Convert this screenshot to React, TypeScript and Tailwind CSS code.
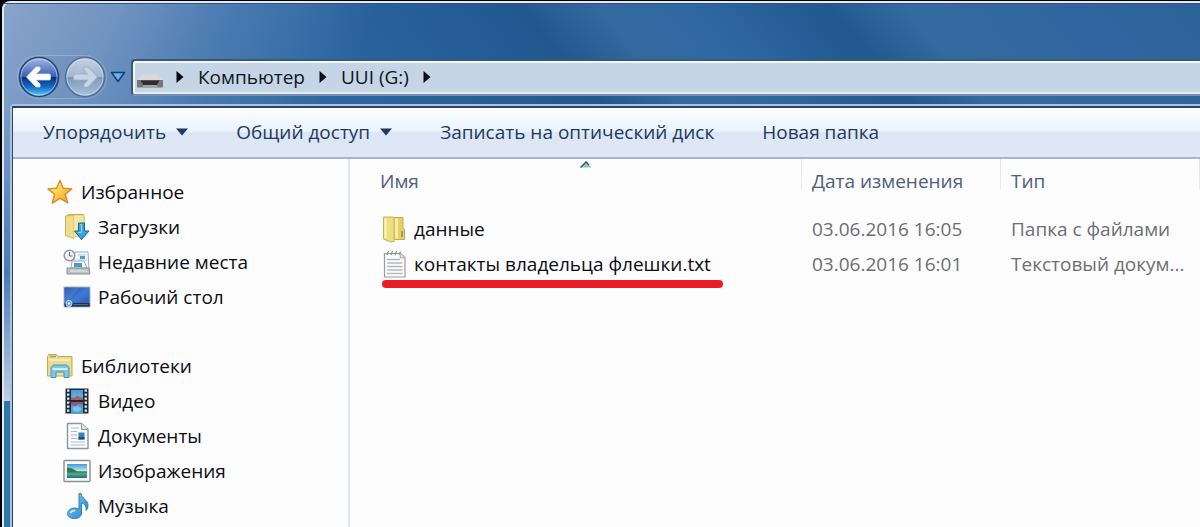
import type { ReactNode } from 'react';
import { clsx } from 'clsx';

interface NavItem {
  label: string;
  icon: ReactNode;
}

interface NavGroup extends NavItem {
  items: NavItem[];
}

interface FileEntry {
  name: string;
  icon: ReactNode;
  modified: string;
  type: string;
  marked?: boolean;
}

const StarIcon = () => (
  <svg viewBox="0 0 26 26" className="w-[26px] h-[26px]" aria-hidden="true">
    <defs>
      <linearGradient id="star" x1="0" y1="0" x2="1" y2="1">
        <stop offset="0" stopColor="#fff3a0" />
        <stop offset="0.5" stopColor="#fcd04a" />
        <stop offset="1" stopColor="#ee8f1c" />
      </linearGradient>
    </defs>
    <path
      d="M13 1.5l3.2 7.8 8.6.6-6.6 5.4 2.6 8.6-7.8-4.6-7.8 4.8 2.4-8.8L1 9.9l8.6-.6z"
      fill="url(#star)"
      stroke="#d98a2b"
      strokeWidth="1.4"
      strokeLinejoin="round"
    />
  </svg>
);

const DownloadsIcon = () => (
  <svg viewBox="0 0 26 28" className="w-[26px] h-7" aria-hidden="true">
    <path d="M1.5 3.5L5 1.5h14a1 1 0 0 1 1 1v21H9l-7.5-1.5z" fill="#e9cf74" stroke="#c9a94f" />
    <path d="M1.5 3l8.5-1v23.5l-8.5-3z" fill="#f3dc8a" stroke="#cfae55" strokeWidth="0.8" />
    <path d="M10 2.5h9.5v21H10z" fill="#f7e7a4" />
    <path d="M14.5 10h6v8H25l-7.5 8.5L10.5 18h4z" fill="#3aa2e0" stroke="#17699f" strokeLinejoin="round" />
    <path d="M16 11.5h1.5v8H14" stroke="#9bdcf8" fill="none" />
  </svg>
);

const RecentIcon = () => (
  <svg viewBox="0 0 28 26" className="w-7 h-[26px]" aria-hidden="true">
    <path d="M12 3h13l1 17H10z" fill="#f4f8fb" stroke="#9fabb5" />
    <path d="M15 6h8M15 11h9" stroke="#b7cbd8" />
    <path d="M17 7h5v3h-5z" fill="#4aa0c8" />
    <path d="M9 12h12l3 7H8z" fill="#fff" stroke="#9fabb5" />
    <path d="M11 14h8v4h-8z" fill="#4d9cbf" />
    <path d="M4 19h22l1 6H4z" fill="#bcc3c9" stroke="#87919a" />
    <path d="M7 22h17" stroke="#e9edf0" />
    <circle cx="6.5" cy="6.5" r="5.3" fill="#f2f5f7" stroke="#8d98a2" strokeWidth="1.5" />
    <path d="M6.5 3v4h3" stroke="#5f6c78" fill="none" />
  </svg>
);

const DesktopIcon = () => (
  <svg viewBox="0 0 28 22" className="w-7 h-[22px]" aria-hidden="true">
    <defs>
      <linearGradient id="desk" x1="0" y1="0" x2="1" y2="1">
        <stop offset="0" stopColor="#163f94" />
        <stop offset="0.5" stopColor="#3f79d6" />
        <stop offset="1" stopColor="#2255b8" />
      </linearGradient>
    </defs>
    <rect x="1" y="1" width="26" height="20" fill="url(#desk)" stroke="#aab6c6" />
    <path d="M2 2h14L4 17H2z" fill="#6f9fe8" opacity="0.3" />
    <path d="M1.5 17h25v3.500h-25z" fill="#27323f" />
    <path d="M10 18.5h15" stroke="#5a6877" />
    <circle cx="6" cy="17.500" r="3" fill="#4c9fd4" stroke="#bfe2f5" />
    <path d="M4.500 17.500h3M6 16v3" stroke="#e7f6fd" />
  </svg>
);

const LibrariesIcon = () => (
  <svg viewBox="0 0 28 26" className="w-7 h-[26px]" aria-hidden="true">
    <path d="M1.5 3.5l1-2h8l1.5 2h14v19.5H1.5z" fill="#eddb8b" stroke="#c2a955" strokeLinejoin="round" />
    <path d="M4 3.5h6" stroke="#7ab069" strokeWidth="1.5" />
    <path d="M2.5 7h22" stroke="#fbf2bf" strokeWidth="1.5" />
    <path
      d="M5 24.5v-10L7.500 12h13l2.500 2.500v10h-5V19h-8v5.500z"
      fill="#7cc6e6"
      stroke="#4595be"
      strokeLinejoin="round"
    />
    <path d="M6.5 16h15" stroke="#cdeefa" strokeWidth="2" />
  </svg>
);

const VideoIcon = () => (
  <svg viewBox="0 0 26 28" className="w-[26px] h-7" aria-hidden="true">
    <rect x="1.500" y="1.500" width="23" height="25" fill="#1d2a35" />
    <path d="M4.200 2.500V26M21.800 2.500V26" stroke="#dbe8ef" strokeWidth="2.400" strokeDasharray="2.200 1.800" />
    <path d="M7 3h12v10H7zM7 15h12v11H7z" fill="#4aa0dc" />
    <path d="M7 10l3-5 3 3 3-3 3 4v4H7z" fill="#6ea7cd" />
    <path d="M7 13v-3l3 1 3-2 6 2v2z" fill="#9b6370" />
    <path d="M7 15h12v3l-4-1-4 2-4-1z" fill="#a35260" />
    <path d="M9 20l5-1 4 3-4 3-5-1z" fill="#75c4ee" />
  </svg>
);

const DocumentsIcon = () => (
  <svg viewBox="0 0 26 28" className="w-[26px] h-7" aria-hidden="true">
    <path d="M3.5 1.5h14l6.500 6v19h-20.500z" fill="#fbfcfd" stroke="#8f959c" strokeWidth="1.4" strokeLinejoin="round" />
    <path d="M17.500 1.500v6H24" fill="#dfe5ea" stroke="#8f959c" strokeLinejoin="round" />
    <path d="M7 6h8M7 9.500h6M7 13h6M7 16.500h6M7 20h14M7 23h14" stroke="#a8bccd" strokeWidth="1.2" />
    <path d="M14.500 10.500h6v7h-6z" fill="#3a80bd" />
    <path d="M14.500 15h6v2.500h-6z" fill="#24506f" />
  </svg>
);

const PicturesIcon = () => (
  <svg viewBox="0 0 28 24" className="w-7 h-6" aria-hidden="true">
    <defs>
      <linearGradient id="sky" x1="0" y1="0" x2="0" y2="1">
        <stop offset="0" stopColor="#3f9bd0" />
        <stop offset="0.5" stopColor="#c4e8ef" />
        <stop offset="0.55" stopColor="#2c7c5c" />
        <stop offset="0.7" stopColor="#58a98a" />
        <stop offset="1" stopColor="#1c6f86" />
      </linearGradient>
    </defs>
    <rect x="1" y="1.500" width="26" height="21" rx="1" fill="#fdfdfd" stroke="#8b8f93" strokeWidth="1.4" />
    <rect x="4" y="5" width="20" height="14" fill="url(#sky)" />
    <path d="M4 9c5-1 8 3 12 4H4z" fill="#2b7d4d" />
  </svg>
);

const MusicIcon = () => (
  <svg viewBox="0 0 26 28" className="w-[26px] h-7" aria-hidden="true">
    <defs>
      <linearGradient id="note" x1="0" y1="0" x2="1" y2="1">
        <stop offset="0" stopColor="#8fd3f7" />
        <stop offset="1" stopColor="#1f7ec4" />
      </linearGradient>
    </defs>
    <path
      d="M15 1.500h2c.5 5 7 6 7 12 0 2-.8 4-2 5 .7-5-2-7-4.500-7.500V21c0 3.500-3 5.500-7 5.500s-7-2-7-5S6.500 16 10.500 16c2 0 3.500.5 4.500 1z"
      fill="url(#note)"
      stroke="#2a80bb"
    />
    <path d="M6.500 21c.5-1.800 2.500-2.500 4.500-2.300" stroke="#d5f0fd" strokeWidth="1.5" fill="none" />
  </svg>
);

const FolderIcon = () => (
  <svg viewBox="0 0 24 28" className="w-6 h-7" aria-hidden="true">
    <path d="M10 2.500h11v10l1.500 2v10H10z" fill="#e5cf66" stroke="#c7ad49" strokeLinejoin="round" />
    <path d="M13 3.500h3v20h-3z" fill="#f8ecae" />
    <path d="M1.500 2H11l1 1.500v23L9 27l-7.500-3z" fill="#efdf83" stroke="#cbb252" strokeLinejoin="round" />
    <path d="M3.500 3.500V23" stroke="#fbf4c2" strokeWidth="2" />
    <path d="M20 16v6" stroke="#8fa07b" strokeWidth="1.8" />
  </svg>
);

const TextFileIcon = () => (
  <svg viewBox="0 0 24 28" className="w-6 h-7" aria-hidden="true">
    <path d="M2.500 3.500h16l4.500 4V27H2.500z" fill="#fcfcfc" stroke="#9b9b9b" strokeWidth="1.2" />
    <path d="M18 3.500l.5 4.500H23" fill="#e6e6e6" stroke="#a5a5a5" />
    <path d="M5 5l1.500-4M9 5l1.500-4M13 5l1.500-4M17 4.500l1.500-3" stroke="#8d8d8d" strokeWidth="1.2" />
    <path d="M5 9.500h13M5 13h15.500M5 16.500h15.500M5 20h15.500M5 23.500h15.500" stroke="#b4b8bd" strokeWidth="1.3" />
  </svg>
);

const DriveIcon = () => (
  <svg viewBox="0 0 28 16" className="w-7 h-4 mt-2" aria-hidden="true">
    <path d="M6 1.500h16l5 6H1z" fill="#d9d9db" />
    <path d="M1 7h26v6.500a1 1 0 0 1-1 1H2a1 1 0 0 1-1-1z" fill="#77767a" />
    <path d="M4.500 7.500h19l-3 5h-13z" fill="#2f2d30" />
    <path d="M7 12h14v2.500H7z" fill="#a3a2a5" />
  </svg>
);

const Orb = ({ forward = false }: { forward?: boolean }) => (
  <svg viewBox="0 0 42 42" className="w-[42px] h-[42px]" aria-hidden="true">
    <defs>
      <linearGradient id="orbBack" x1="0" y1="0" x2="0" y2="1">
        <stop offset="0" stopColor="#a9b9e6" />
        <stop offset="0.49" stopColor="#3c5fb4" />
        <stop offset="0.51" stopColor="#08307f" />
        <stop offset="0.75" stopColor="#1768c4" />
        <stop offset="1" stopColor="#59d4fa" />
      </linearGradient>
      <linearGradient id="orbForward" x1="0" y1="0" x2="0" y2="1">
        <stop offset="0" stopColor="#c5d3e5" />
        <stop offset="0.49" stopColor="#a3b7cf" />
        <stop offset="0.51" stopColor="#7f9ab9" />
        <stop offset="1" stopColor="#a9c2da" />
      </linearGradient>
    </defs>
    <circle
      cx="21"
      cy="21"
      r="19.5"
      fill={forward ? 'url(#orbForward)' : 'url(#orbBack)'}
      stroke={forward ? '#526f93' : '#25467c'}
      strokeWidth="1.6"
    />
    <circle cx="21" cy="21" r="18" fill="none" stroke="#dce8f8" strokeOpacity="0.6" />
    <path
      d="M8.500 21l9.500-10h4v3l-4 4h13a1.500 1.500 0 0 1 1.500 1.500v3A1.500 1.500 0 0 1 31 24H18l4 4v3h-4z"
      transform={forward ? 'rotate(180 21 21)' : undefined}
      fill={forward ? '#c8d5e3' : '#fff'}
      stroke={forward ? '#9aafc7' : '#d3e2f6'}
      strokeWidth="0.8"
      strokeLinejoin="round"
    />
  </svg>
);

const CrumbArrow = () => (
  <svg viewBox="0 0 8 14" className="w-2 h-3.5" aria-hidden="true">
    <path d="M0.500 1l7 6-7 6z" fill="#05080c" />
  </svg>
);

const MenuArrow = () => (
  <svg viewBox="0 0 12 8" className="w-3 h-2" aria-hidden="true">
    <path d="M0 0.500h12L6 7.500z" fill="#1e395b" />
  </svg>
);

const commands = [
  { label: 'Упорядочить', menu: true },
  { label: 'Общий доступ', menu: true },
  { label: 'Записать на оптический диск', menu: false },
  { label: 'Новая папка', menu: false },
];

const navGroups: NavGroup[] = [
  {
    label: 'Избранное',
    icon: <StarIcon />,
    items: [
      { label: 'Загрузки', icon: <DownloadsIcon /> },
      { label: 'Недавние места', icon: <RecentIcon /> },
      { label: 'Рабочий стол', icon: <DesktopIcon /> },
    ],
  },
  {
    label: 'Библиотеки',
    icon: <LibrariesIcon />,
    items: [
      { label: 'Видео', icon: <VideoIcon /> },
      { label: 'Документы', icon: <DocumentsIcon /> },
      { label: 'Изображения', icon: <PicturesIcon /> },
      { label: 'Музыка', icon: <MusicIcon /> },
    ],
  },
];

const files: FileEntry[] = [
  { name: 'данные', icon: <FolderIcon />, modified: '03.06.2016 16:05', type: 'Папка с файлами' },
  {
    name: 'контакты владельца флешки.txt',
    icon: <TextFileIcon />,
    modified: '03.06.2016 16:01',
    type: 'Текстовый докум...',
    marked: true,
  },
];

const headCell =
  'h-[52px] pb-2 font-normal text-left text-[#4c607a] bg-[linear-gradient(#dbe6f3,#e6eef7)] bg-[length:1px_31px] bg-no-repeat';

function NavLink({ label, icon, nested }: NavItem & { nested?: boolean }) {
  return (
    <a
      href="#"
      className={clsx('flex items-center h-[35px] gap-[7px] text-[#0c0c14]', nested ? 'pl-[50px]' : 'pl-[33px]')}
    >
      <span className="flex justify-center w-7 shrink-0">{icon}</span>
      {label}
    </a>
  );
}

function AddressBar() {
  return (
    <div className="flex items-center gap-1 pl-[14px] pb-1.5">
      <div className="flex items-center gap-1 rounded-full bg-[#6f90bb]/40 ring-1 ring-white/20">
        <button type="button" aria-label="Назад">
          <Orb />
        </button>
        <button type="button" aria-label="Вперед">
          <Orb forward />
        </button>
      </div>
      <button type="button" aria-label="Последние страницы" className="w-4 mr-px">
        <svg viewBox="0 0 16 12" className="w-4 h-3" aria-hidden="true">
          <path d="M1.500 1.500h13L8 10.500z" fill="#5fb3ee" stroke="#153f70" strokeWidth="1.5" strokeLinejoin="round" />
        </svg>
      </button>
      <div className="flex flex-1 items-center h-[37px] rounded-l-sm border-2 border-r-0 border-t-[#3c5878] border-l-[#3c5878] border-b-[#7890ad] bg-[#c5d5e6] shadow-[inset_2px_2px_0_#f1f6fb,inset_0_-2px_0_#e2ecf4] pl-[3px] text-[#0e1420]">
        <DriveIcon />
        <span className="flex items-center ml-3 gap-[14px]">
          <CrumbArrow />
          <button type="button">Компьютер</button>
          <CrumbArrow />
          <button type="button">UUI (G:)</button>
          <CrumbArrow />
        </span>
      </div>
    </div>
  );
}

function CommandBar() {
  return (
    <div className="flex items-center h-[51px] gap-12 pl-[30px] pb-px border-b-2 border-[#a9b5c9] bg-[linear-gradient(#fdfeff,#e8f2fc_50%,#dce6f4_50%,#dde7f6)] text-[#1e395b] whitespace-nowrap">
      {commands.map(({ label, menu }) => (
        <button key={label} type="button" className="flex items-center gap-2.5">
          {label}
          {menu && <MenuArrow />}
        </button>
      ))}
    </div>
  );
}

function FileTable() {
  return (
    <table className="w-full table-fixed border-collapse">
      <colgroup>
        <col className="w-[451px]" />
        <col className="w-[199px]" />
        <col className="w-[199px]" />
        <col />
      </colgroup>
      <thead>
        <tr>
          <th className="relative h-[52px] pb-2 pl-[30px] font-normal text-left text-[#4c607a]">
            Имя
            <svg viewBox="0 0 12 7" className="absolute top-0.5 left-[230px] w-3 h-[7px]" aria-hidden="true">
              <path d="M0.500 6.500L6 1l5.500 5.500z" fill="#8cc4dc" />
              <path d="M0.500 6.500L6 1l3 3" stroke="#2c5368" strokeWidth="1.3" fill="none" />
            </svg>
          </th>
          <th className={clsx(headCell, 'pl-[11px]')}>Дата изменения</th>
          <th className={clsx(headCell, 'pl-[11px]')}>Тип</th>
          <td className={headCell} />
        </tr>
      </thead>
      <tbody>
        {files.map(file => (
          <tr key={file.name} className="h-[35px]">
            <td className="p-0 pl-8">
              <span className="relative inline-flex items-center gap-2 align-middle text-[#0c0c14] whitespace-nowrap">
                {file.icon}
                {file.name}
                {file.marked && (
                  <span className="absolute left-0 -right-3 top-[30px] h-2 rounded-full bg-[#eb1c26]" />
                )}
              </span>
            </td>
            <td className="p-0 pl-[11px] text-[#6d6d72]">{file.modified}</td>
            <td className="p-0 pl-[11px] text-[#6d6d72] whitespace-nowrap">{file.type}</td>
            <td />
          </tr>
        ))}
      </tbody>
    </table>
  );
}

export default function App() {
  return (
    <div className="flex min-h-screen bg-black pl-0.5 pt-px font-['Open_Sans','Noto_Sans',sans-serif] text-[19px] leading-7">
      <div className="flex flex-1 flex-col min-w-0 rounded-tl-lg border-l-2 border-t-2 border-[#dfe9f5] bg-[linear-gradient(115deg,#88a4c9_0px,#7697c3e6_110px,#5a87bb99_210px,#3a70aa00_340px),linear-gradient(50deg,#3a6ea8_0%,#2c659f_28%,#235a93_44%,#22588f_47%,#33699f_53%,#3068a2_60%,#235a92_69%,#225990_71%,#336a9f_77%,#3166a0_90%,#2b6297_100%)] bg-[length:100%_110px] bg-no-repeat bg-[#2f78a8]">
        <header className="pt-[52px] border-t border-[#35567f]">
          <AddressBar />
        </header>
        <div className="flex flex-1 bg-[linear-gradient(#7a9cc8,#7193c3_50px,#4a7ab5_170px,#c0cfe0_297px,#2f78a8_297px)]">
          <div className="flex flex-1 flex-col min-w-0 ml-1.5 border-l-2 border-t-2 border-[#a9c3df] rounded-tl-sm">
            <div className="flex flex-1 flex-col border-l border-t-2 border-[#2c4565] bg-[#fdfdfe]">
              <CommandBar />
              <div className="flex flex-1">
                <nav className="w-[337px] shrink-0 pt-[15px] border-r-2 border-[#dbe7f3]">
                  {navGroups.map(group => (
                    <div key={group.label} className="mb-[34px] last:mb-0">
                      <NavLink label={group.label} icon={group.icon} />
                      {group.items.map(item => (
                        <NavLink key={item.label} {...item} nested />
                      ))}
                    </div>
                  ))}
                </nav>
                <main className="flex-1 min-w-0">
                  <FileTable />
                </main>
              </div>
            </div>
          </div>
        </div>
      </div>
    </div>
  );
}
